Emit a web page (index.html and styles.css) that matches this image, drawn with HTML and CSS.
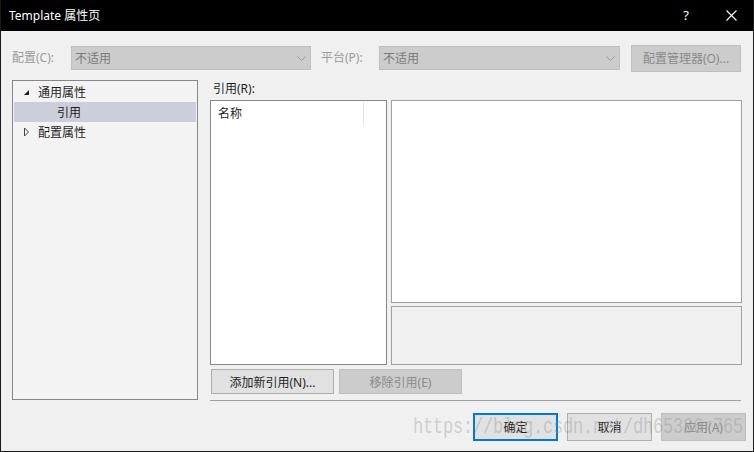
FILE: index.html
```html
<!DOCTYPE html>
<html>
<head>
<meta charset="utf-8">
<link rel="stylesheet" href="styles.css">
</head>
<body>
<div class="window">
  <div class="titlebar">
    <span class="title">Template 属性页</span>
    <span class="cap help">?</span>
    <span class="cap close"><svg width="11" height="11" viewBox="0 0 11 11"><path d="M0.5 0.5L10.5 10.5M10.5 0.5L0.5 10.5" stroke="#fff" stroke-width="1.1" fill="none"/></svg></span>
  </div>
  <div class="content">
    <div class="toolbar">
      <span class="lbl lbl-config">配置(C):</span>
      <div class="combo combo-config"><span class="combo-text">不适用</span><svg class="chev" width="9" height="5" viewBox="0 0 9 5"><path d="M0.5 0.5L4.5 4.5L8.5 0.5" stroke="#9a9a9a" fill="none"/></svg></div>
      <span class="lbl lbl-platform">平台(P):</span>
      <div class="combo combo-platform"><span class="combo-text">不适用</span><svg class="chev" width="9" height="5" viewBox="0 0 9 5"><path d="M0.5 0.5L4.5 4.5L8.5 0.5" stroke="#9a9a9a" fill="none"/></svg></div>
      <button class="btn btn-disabled btn-mgr">配置管理器(O)...</button>
    </div>
    <div class="main">
      <div class="tree">
        <div class="tree-row"><svg class="tw" width="10" height="10" viewBox="0 0 10 10"><path d="M6 3L6 8L1 8Z" fill="#1e1e1e"/></svg><span>通用属性</span></div>
        <div class="tree-row child sel"><span>引用</span></div>
        <div class="tree-row"><svg class="tw" width="10" height="10" viewBox="0 0 10 10"><path d="M1.5 1L5.5 5L1.5 9Z" fill="none" stroke="#444" stroke-width="1"/></svg><span>配置属性</span></div>
      </div>
      <div class="pane">
        <div class="pane-label">引用(R):</div>
        <div class="lists">
          <div class="reflist">
            <div class="ref-header"><span class="col">名称</span></div>
          </div>
          <div class="side">
            <div class="detail"></div>
            <div class="desc"></div>
          </div>
        </div>
        <div class="pane-buttons">
          <button class="btn btn-ref">添加新引用(N)...</button>
          <button class="btn btn-disabled btn-ref">移除引用(E)</button>
        </div>
        <div class="sep"></div>
      </div>
    </div>
    <div class="footer">
      <button class="btn btn-foot btn-default">确定</button>
      <button class="btn btn-foot">取消</button>
      <button class="btn btn-foot btn-disabled">应用(A)</button>
    </div>
  </div>
  <div class="watermark">https://blog.csdn.net/dh65386r765</div>
</div>
</body>
</html>
```
FILE: styles.css
```css
* { box-sizing: border-box; }
html, body { margin: 0; padding: 0; }
body {
  width: 754px;
  height: 452px;
  background: #000;
  font-family: "Noto Sans", "Noto Sans CJK SC", sans-serif;
  font-size: 12px;
  color: #1e1e1e;
  overflow: hidden;
}
.window {
  position: relative;
  width: 754px;
  height: 452px;
  border: 1px solid #1a1a1a;
  border-top: none;
  display: flex;
  flex-direction: column;
  background: #000;
}
.titlebar {
  height: 31px;
  flex: none;
  display: flex;
  align-items: center;
  background: #000;
  color: #fff;
}
.title {
  flex: 1;
  padding-left: 8px;
  font-size: 12px;
  line-height: 31px;
}
.cap {
  width: 46px;
  height: 31px;
  display: flex;
  align-items: center;
  justify-content: center;
}
.help {
  font-family: "Noto Sans", sans-serif;
  font-size: 13px;
  padding-left: 4px;
  padding-bottom: 2px;
}
.close { padding-left: 2px; padding-bottom: 1px; }
.content {
  flex: 1;
  background: #f0f0f0;
  display: flex;
  flex-direction: column;
}
.toolbar {
  display: flex;
  align-items: center;
  height: 28px;
  margin-top: 13px;
  padding-left: 11px;
}
.lbl {
  color: #9b9b9b;
  line-height: 24px;
}
.lbl-config { width: 59px; }
.lbl-platform { width: 58px; margin-left: 10px; }
.combo {
  height: 24px;
  background: #cccccc;
  border: 1px solid #bfbfbf;
  display: flex;
  align-items: center;
  justify-content: space-between;
  padding: 0 4px 0 3px;
  color: #7a7a7a;
}
.combo-config { width: 240px; }
.combo-platform { width: 241px; }
.chev { margin-top: 1px; }
.btn {
  font-family: "Noto Sans", "Noto Sans CJK SC", sans-serif;
  font-size: 12px;
  background: #e1e1e1;
  border: 1px solid #adadad;
  color: #1e1e1e;
  padding: 0;
  margin: 0;
  display: flex;
  align-items: center;
  justify-content: center;
}
.btn-disabled {
  background: #cccccc;
  border-color: #bfbfbf;
  color: #8a8a8a;
}
.btn-mgr {
  width: 110px;
  height: 27px;
  margin-left: 11px;
}
.main {
  display: flex;
  margin-top: 8px;
  padding-left: 11px;
  gap: 12px;
}
.tree {
  width: 186px;
  height: 320px;
  border: 1px solid #828790;
  background: #f3f3f3;
  padding: 1px;
}
.tree-row {
  height: 20px;
  display: flex;
  align-items: center;
  padding-left: 9px;
  gap: 5px;
}
.tree-row.child { padding-left: 43px; }
.tree-row.sel { background: #cccedb; }
.tw { flex: none; }
.pane {
  width: 532px;
  display: flex;
  flex-direction: column;
}
.pane-label {
  height: 20px;
  line-height: 18px;
  padding-left: 3px;
}
.lists {
  display: flex;
  gap: 4px;
  height: 265px;
}
.reflist {
  width: 177px;
  height: 265px;
  border: 1px solid #828790;
  background: #fff;
}
.ref-header {
  height: 25px;
  display: flex;
}
.col {
  width: 153px;
  height: 24px;
  margin-top: 1px;
  padding-left: 7px;
  line-height: 23px;
  border-right: 1px solid #e5e5e5;
}
.side {
  width: 351px;
  display: flex;
  flex-direction: column;
  gap: 3px;
}
.detail {
  height: 203px;
  border: 1px solid #a0a0a0;
  background: #fff;
}
.desc {
  height: 59px;
  border: 1px solid #a0a0a0;
  background: #f0f0f0;
}
.pane-buttons {
  display: flex;
  gap: 5px;
  margin-top: 4px;
  padding-left: 1px;
}
.btn-ref {
  width: 123px;
  height: 25px;
}
.sep {
  margin-top: 6px;
  height: 1px;
  width: 531px;
  background: #a0a0a0;
}
.footer {
  display: flex;
  justify-content: flex-end;
  gap: 9px;
  margin-top: 12px;
  padding-right: 7px;
}
.btn-foot {
  width: 85px;
  height: 28px;
}
.btn-default {
  border: 2px solid #0078d7;
}
.watermark {
  position: absolute;
  left: 412px;
  top: 416px;
  font-family: "Liberation Mono", monospace;
  font-size: 17px;
  line-height: 24px;
  letter-spacing: -0.2px;
  color: rgba(150, 150, 150, 0.4);
  white-space: nowrap;
  pointer-events: none;
  transform: scaleY(1.25);
  transform-origin: left center;
}
```
